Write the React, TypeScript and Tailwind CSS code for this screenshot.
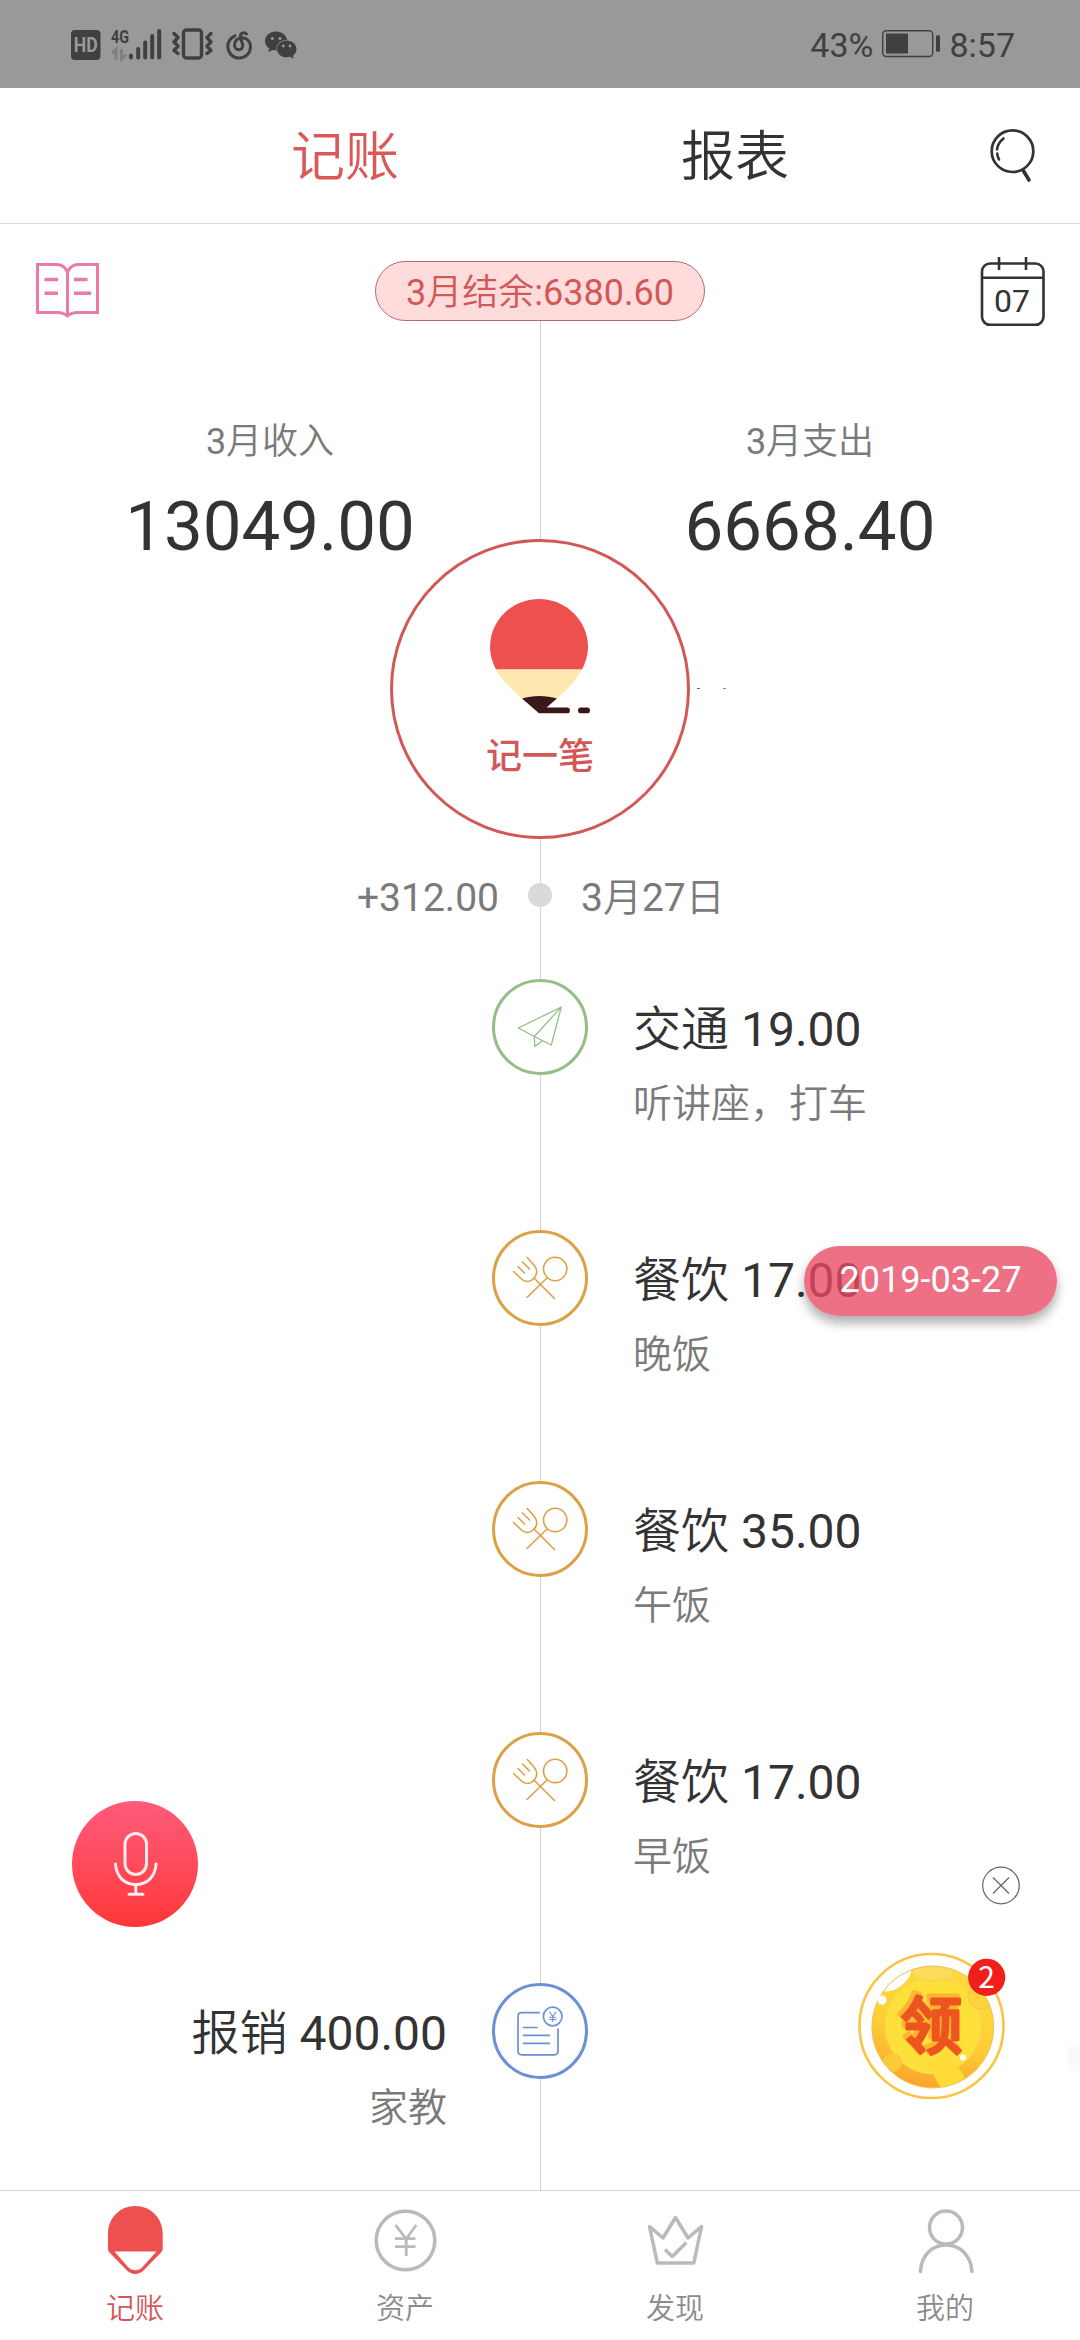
import type { ReactNode } from 'react';

type Kind = 'travel' | 'food' | 'refund';

interface Entry {
  kind: Kind;
  name: string;
  amount: string;
  note: string;
  side: 'left' | 'right';
}

const entries: Entry[] = [
  { kind: 'travel', name: '交通', amount: '19.00', note: '听讲座，打车', side: 'right' },
  { kind: 'food', name: '餐饮', amount: '17.00', note: '晚饭', side: 'right' },
  { kind: 'food', name: '餐饮', amount: '35.00', note: '午饭', side: 'right' },
  { kind: 'food', name: '餐饮', amount: '17.00', note: '早饭', side: 'right' },
  { kind: 'refund', name: '报销', amount: '400.00', note: '家教', side: 'left' },
];

const ringColor: Record<Kind, string> = {
  travel: 'border-[#94be85] text-[#94be85]',
  food: 'border-[#dca046] text-[#dca046]',
  refund: 'border-[#6a90d6] text-[#6a90d6]',
};

/* Chinese characters are set one step lighter than the digits beside them. */
function Han({ children }: { children: ReactNode }) {
  return <span className="font-[350]">{children}</span>;
}

function StatusIcons() {
  return (
    <svg width="240" height="48" viewBox="66 20 240 48" fill="none" stroke="#404040">
      <rect x="71" y="30" width="29.5" height="30" rx="4" fill="#404040" stroke="none" />
      <text x="85.800" y="52" textAnchor="middle" fontSize="19.500" fontWeight="700" fill="#999" stroke="none" textLength="24" lengthAdjust="spacingAndGlyphs">HD</text>
      <text x="111" y="43" fontSize="19" fontWeight="700" fill="#404040" stroke="none" textLength="18" lengthAdjust="spacingAndGlyphs">4G</text>
      <path d="M112 53.500l4-4V59.500M121.500 49v10l4.500-4.500" stroke="#7f7f7f" strokeWidth="3" />
      <path d="M131 55.500v2M138.200 49v8.500M145.200 42.500v15M152.200 36v21.500M159.200 31v26.500" strokeWidth="4" strokeLinecap="round" />
      <rect x="183.500" y="30" width="18" height="28" rx="3" strokeWidth="3.400" />
      <path d="M174 33.500l4 4-4 4.500 4 4-4 4.500 4 3M211 33.500l-4 4 4 4.500-4 4 4 4.500-4 3" strokeWidth="3.400" strokeLinejoin="round" strokeLinecap="round" />
      <path d="M235 35.800C230.500 38 227.800 41.800 227.800 46.300c0 6.500 5 11.700 11.300 11.700s11.400-5 11.400-11.300c0-5-3.700-9-8.500-9-4.500 0-7.500 3.500-7.500 7 0 3 2 5 4.200 5 2.500 0 4.300-2 4-4.500-.3-3-2.500-6.700-2.300-9.500.2-3 4-3.800 6-1.700" strokeWidth="3" strokeLinecap="round" />
      <path d="M276 31.500c-6.200 0-11 4.300-11 9.600 0 3.200 1.600 5.800 4.300 7.500l-1 3.600 4.200-2.200c1.300.3 2.500.5 4 .5-.8-6 4-10.800 10.700-10.500-1-5-5.500-8.500-11.200-8.500z" fill="#404040" stroke="none" />
      <path d="M286.800 40.500c-5.500 0-9.800 3.800-9.800 8.400 0 4.700 4.300 8.400 9.800 8.400 1.200 0 2.300-.2 3.300-.5l3.600 2-.9-3.100c2.300-1.600 3.700-4 3.700-6.800 0-4.600-4.300-8.400-9.700-8.400z" fill="#404040" stroke="none" />
      <g fill="#999" stroke="none">
        <circle cx="272.300" cy="38.500" r="1.500" /><circle cx="280" cy="38.500" r="1.500" />
        <circle cx="283.300" cy="46" r="1.400" /><circle cx="290" cy="46" r="1.400" />
      </g>
    </svg>
  );
}

function BatteryIcon() {
  return (
    <svg width="60" height="30" viewBox="880 30 60 30" fill="none" stroke="#404040">
      <rect x="881.700" y="31.700" width="50" height="25.800" rx="3.500" strokeWidth="1.400" />
      <rect x="885" y="34.500" width="22" height="20" fill="#404040" stroke="none" />
      <rect x="935" y="36" width="4" height="17" rx="1.800" fill="#404040" stroke="none" />
    </svg>
  );
}

function SearchIcon() {
  return (
    <svg width="60" height="64" viewBox="980 124 60 64" fill="none" stroke="#333" strokeLinecap="round">
      <circle cx="1012.500" cy="151.200" r="20.800" strokeWidth="2.700" />
      <path d="M1023.500 171l5.500 9" strokeWidth="3.600" />
      <path d="M1003.500 138.500c-3.500 2.800-6 6.500-6.500 11M997.200 153.500c.2 2.500.8 4.300 1.800 6" strokeWidth="2.600" />
    </svg>
  );
}

function BookIcon() {
  return (
    <svg width="75" height="80" viewBox="30 251 75 80" fill="none" stroke="#e87bac" strokeWidth="3">
      <path d="M67.500 272.500c-2-5.500-6-8-11-8H37.500V312.500H57c4 0 7.500.8 10.500 3.500 3-2.700 6.500-3.500 10.500-3.500h19.500V264.500H78.500c-5 0-9 2.500-11 8zV315" />
      <path d="M44.500 279.500H58M44.500 293.300H58M74 279.500h13.500M74 293.300h17" strokeWidth="3.600" />
    </svg>
  );
}

function CalendarIcon() {
  return (
    <svg width="75" height="80" viewBox="975 251 75 80" fill="none" stroke="#333" strokeWidth="2.600">
      <rect x="982" y="263.500" width="61.500" height="61.300" rx="8" />
      <path d="M982 277.700h61.500M999 257v13M1026 257v13" />
      <text x="1012" y="312.300" textAnchor="middle" fontSize="32" fill="#333" stroke="none">07</text>
    </svg>
  );
}

function BalloonPencil() {
  return (
    <svg width="294" height="190" viewBox="393 542 294 190">
      <path d="M539 599c-27.500 0-49 22-49 48 0 8 2.500 15.500 6 22.500h86c3.500-7 6-14.500 6-22.500 0-26-21.500-48-49-48z" fill="#ee5050" />
      <path d="M496 669.500h86c-6.500 11.500-16 21-26 29.500h-33.500c-10-9-20-18-26.500-29.500z" fill="#ffe8b0" />
      <path d="M522 698.500c10-3.500 24.500-3.500 35 0l-10.500 9H567a2.900 2.900 0 0 1 0 5.800H539z" fill="#3a1718" />
      <rect x="578" y="707.500" width="12" height="5.800" rx="2.900" fill="#3a1718" />
    </svg>
  );
}

function PlaneIcon() {
  return (
    <svg width="60" height="60" viewBox="510 997 60 60" fill="none" stroke="currentColor" strokeWidth="1.300" strokeLinejoin="round">
      <path d="M518.300 1028l43-21-10 38-17-8.500zM561.300 1007l-27 29.500.5 10 8-6" />
    </svg>
  );
}

function CutleryIcon() {
  return (
    <svg width="60" height="60" viewBox="510 1248 60 60" fill="none" stroke="currentColor" strokeWidth="1.600" strokeLinecap="round">
      <circle cx="555.200" cy="1269" r="11.700" />
      <path d="M547 1278l-20 19.500M534 1278l20.500 20.500" />
      <path d="M513.500 1271.500l8 7.500c4 3.500 9 3.300 12.500-.8s3.500-8.700.3-12.700l-7-8M518 1266.500l6.500 6.500M522.500 1262l7 7" />
    </svg>
  );
}

function ReceiptIcon() {
  return (
    <svg width="60" height="60" viewBox="510 2001 60 60" fill="none" stroke="currentColor" strokeWidth="1.700" strokeLinecap="round">
      <path d="M539 2012.700h-17.200q-3.800 0-3.800 3.800v34.500q0 3.800 3.800 3.800h32.400q3.800 0 3.800-3.800V2029" />
      <path d="M523.500 2027.500H537M523.500 2035.300h26M523.500 2043.300h26" />
      <circle cx="552.700" cy="2016.500" r="9.300" />
      <path d="M549.500 2012l3.200 4.500 3.200-4.500M552.700 2016.500v5M549.500 2017.200h6.400M549.500 2019.500h6.400" strokeWidth="1.100" />
    </svg>
  );
}

const kindIcon: Record<Kind, ReactNode> = {
  travel: <PlaneIcon />,
  food: <CutleryIcon />,
  refund: <ReceiptIcon />,
};

function Details({ entry }: { entry: Entry }) {
  return (
    <div className={entry.side === 'left' ? 'col-start-1 row-start-1 pt-[21px] text-right' : 'col-start-3 row-start-1 pt-[21px]'}>
      <div className="h-[60px] text-[48px] leading-[60px] whitespace-nowrap text-[#333]">
        <Han>{entry.name}</Han> {entry.amount}
      </div>
      <div className="mt-[19px] h-[50px] text-[39px] leading-[50px] whitespace-nowrap text-[#7a7a7a]"><Han>{entry.note}</Han></div>
    </div>
  );
}

function TimelineEntry({ entry }: { entry: Entry }) {
  return (
    <li className="grid h-[251px] shrink-0 grid-cols-[1fr_186px_1fr]">
      <Details entry={entry} />
      <div className="col-start-2 row-start-1 flex justify-center">
        <span className={'flex size-[96px] items-center justify-center rounded-full border-[3px] bg-white ' + ringColor[entry.kind]}>
          {kindIcon[entry.kind]}
        </span>
      </div>
    </li>
  );
}

function Total({ month, label, value }: { month: string; label: string; value: string }) {
  return (
    <div className="flex flex-col items-center pt-[84px]">
      <span className="text-[36px] leading-[54px] text-[#7a7a7a]">{month}<Han>{label}</Han></span>
      <span className="mt-[18px] text-[69px] leading-[80px] text-[#333]">{value}</span>
    </div>
  );
}

function RewardCoin() {
  return (
    <svg width="160" height="160" viewBox="852 1946 160 160">
      <defs>
        <linearGradient id="coin" x1="0.600" y1="0" x2="0.350" y2="1">
          <stop offset="0" stopColor="#fddc38" />
          <stop offset="0.550" stopColor="#fdcf36" />
          <stop offset="1" stopColor="#fba22c" />
        </linearGradient>
        <clipPath id="coinFace"><circle cx="932.800" cy="2027" r="61" /></clipPath>
      </defs>
      <circle cx="931.500" cy="2026" r="72" fill="#fffefa" stroke="#f7c545" strokeWidth="2.600" />
      <g clipPath="url(#coinFace)">
        <circle cx="932.800" cy="2027" r="61" fill="url(#coin)" />
        <circle cx="933" cy="2026" r="48" fill="#fee03a" stroke="#f9d65a" strokeWidth="1" />
        <path d="M925 2060l17 30 26-8-18-28z" fill="#fedb38" />
        <ellipse cx="933" cy="1972" rx="21" ry="9" fill="#fddc5c" stroke="#f7cb55" strokeWidth="0.800" />
        <circle cx="892" cy="2063" r="9.500" fill="#fdcb37" stroke="#f5ba40" strokeWidth="0.800" />
        <circle cx="981" cy="1996" r="13" fill="#fdd33d" stroke="#f5c348" strokeWidth="0.800" />
        <path d="M882 1991c5-11 16-20 29-21 1 9-15 24-29 21z" fill="#fff" />
      </g>
      <circle cx="932.800" cy="2027" r="61" fill="none" stroke="#eec05a" strokeWidth="1" />
      <circle cx="882" cy="2000" r="4.500" fill="#fff" />
      <g fontSize="62" fontWeight="500" textAnchor="middle" strokeLinejoin="round" strokeLinecap="round">
        <text x="929" y="2045.500" fill="#fbb62f" stroke="#fbb62f" strokeWidth="5">领</text>
        <text x="931.500" y="2049" fill="#ee5420" stroke="#ee5420" strokeWidth="2.800">领</text>
      </g>
      <circle cx="963" cy="2057.500" r="3" fill="#fff" />
      <circle cx="986.700" cy="1977.300" r="18.600" fill="#f01f1c" />
      <text x="986.700" y="1988" textAnchor="middle" fontSize="30" fill="#fff" style={{ fontFamily: '"Noto Sans CJK SC", sans-serif' }}>2</text>
    </svg>
  );
}

function NavItem({ label, active, children }: { label: string; active?: boolean; children: ReactNode }) {
  return (
    <a className={active ? 'flex flex-col items-center text-[#d25858]' : 'flex flex-col items-center text-[#8c8c8c]'}>
      {children}
      <span className="text-[29px] leading-[40px]"><Han>{label}</Han></span>
    </a>
  );
}

export default function App() {
  return (
    <div lang="zh-CN" className="flex h-[2340px] w-[1080px] flex-col overflow-hidden bg-white font-['Roboto','Noto_Sans_CJK_SC',sans-serif]">
      <div className="flex h-[88px] shrink-0 items-center bg-[#999] pl-[66px] text-[34px] leading-[40px] text-[#404040]">
        <StatusIcons />
        <span className="ml-auto pt-[2px]">43%</span>
        <span className="mx-[8px]"><BatteryIcon /></span>
        <span className="mr-[65px] pt-[2px]">8:57</span>
      </div>

      <header className="flex h-[136px] shrink-0 items-center border-b border-[#dcdcdc] text-[54px] leading-[64px]">
        <span className="ml-[291px] pt-[5px] text-[#dc5858]"><Han>记账</Han></span>
        <span className="ml-[282px] pt-[5px] text-[#333]"><Han>报表</Han></span>
        <span className="mr-[40px] ml-auto"><SearchIcon /></span>
      </header>

      <main className="relative isolate flex min-h-0 flex-1 flex-col overflow-hidden">
        <div className="absolute top-[97px] bottom-0 left-[540px] -z-10 w-px bg-[#d2d3d4]" />
        <div className="mt-[27px] flex h-[80px] shrink-0 items-center justify-between px-[30px]">
          <BookIcon />
          <div className="flex h-[60px] w-[330px] items-center justify-center rounded-full border border-[#b9686c] bg-[#ffdcdc] pt-[3px] text-[36px] leading-[54px] whitespace-pre text-[#d25858]">
            3<Han>月结余</Han>:6380.60
          </div>
          <CalendarIcon />
        </div>

        <section className="grid h-[236px] shrink-0 grid-cols-2">
          <Total month="3" label="月收入" value="13049.00" />
          <Total month="3" label="月支出" value="6668.40" />
        </section>

        <div className="relative -mt-[28px] flex size-[300px] shrink-0 flex-col items-center self-center rounded-full border-[3px] border-[#d25858] bg-white">
          <BalloonPencil />
          <span className="text-[36px] leading-[50px] font-medium text-[#d25858]">记一笔</span>
          <i className="absolute top-[146px] left-[304px] h-px w-[3px] bg-[#666]" />
          <i className="absolute top-[146px] left-[330px] h-px w-[3px] bg-[#888]" />
        </div>

        <div className="mt-[29px] grid h-[60px] shrink-0 grid-cols-[1fr_82px_1fr] items-center text-[39px] leading-[60px] text-[#7a7a7a]">
          <span className="text-right">+312.00</span>
          <span className="mb-[6px] size-[24px] justify-self-center rounded-full bg-[#d8dadc]" />
          <span>3<Han>月</Han>27<Han>日</Han></span>
        </div>

        <ul className="mt-[51px] flex flex-col">
          {entries.map((entry, i) => (
            <TimelineEntry key={i} entry={entry} />
          ))}
        </ul>

        <div className="absolute top-[1022px] left-[804px] flex h-[70px] w-[253px] items-center justify-center rounded-full bg-[rgb(233,72,98)]/78 text-[36px] leading-[40px] text-white shadow-[0_7px_11px_rgba(0,0,0,0.32)]">
          <span className="pb-[2px]">2019-03-27</span>
        </div>

        <button className="absolute top-[1577px] left-[72px] flex size-[126px] items-center justify-center rounded-full bg-linear-to-b from-[#ff5a7a] to-[#ff3636]">
          <svg width="60" height="80" viewBox="105 1824 60 80" fill="none" stroke="#ffeaee" strokeWidth="3" strokeLinecap="round">
            <rect x="125" y="1833.500" width="21.500" height="41" rx="10.750" />
            <path d="M115.500 1864c1 13 9 20.500 20.300 20.500s19.300-7.500 20.300-20.500M135.800 1885v8.500M129 1894.300h14" />
          </svg>
        </button>

        <svg className="absolute top-[1641px] left-[981px]" width="40" height="40" viewBox="0 0 40 40" fill="none" stroke="#666" strokeWidth="1.200">
          <circle cx="20" cy="20.500" r="18.300" />
          <path d="M12 12.500l16 16M28 12.500l-16 16" />
        </svg>
        <div className="absolute top-[1722px] left-[852px]"><RewardCoin /></div>
        <div className="absolute top-[1823px] right-0 h-[24px] w-[12px] bg-[#fafafa]" />
      </main>

      <nav className="grid h-[150px] shrink-0 grid-cols-4 border-t border-[#d6d8d8] bg-white">
        <NavItem label="记账" active>
          <svg width="80" height="98" viewBox="95 2191 80 98">
            <path d="M135.300 2206c-15.500 0-27.300 12-27.300 27.500V2249c0 1.300.5 2.500 1.500 3.500l17.500 18c4.500 4.500 12 4.500 16.500 0l17.500-18c1-1 1.700-2.200 1.700-3.500v-15.500c0-15.500-12-27.500-27.400-27.500zM114.500 2251.500h42l-14 15.500c-4 4.300-10.500 4.300-14.500 0z" fill="#ee5050" fillRule="evenodd" />
          </svg>
        </NavItem>
        <NavItem label="资产">
          <svg width="80" height="98" viewBox="365 2191 80 98" fill="none" stroke="#bababa" strokeWidth="3.500">
            <circle cx="405.500" cy="2240.500" r="29.300" />
            <path d="M395.500 2225l10.700 14 10-14M406.200 2238v18M395 2238.700h20.500M395 2246.700h20.500" strokeWidth="2.800" />
          </svg>
        </NavItem>
        <NavItem label="发现">
          <svg width="80" height="98" viewBox="635 2191 80 98" fill="none" stroke="#bababa" strokeWidth="3.500" strokeLinejoin="round">
            <path d="M649.500 2226.500l13.500 11.500 12.500-20.500 12.500 20.500 13.500-11.500-7.700 36.500H657.300z" />
            <path d="M665 2249.500l7.300 7 14-14" />
          </svg>
        </NavItem>
        <NavItem label="我的">
          <svg width="80" height="98" viewBox="905 2191 80 98" fill="none" stroke="#bababa" strokeWidth="3.500" strokeLinecap="round">
            <circle cx="946" cy="2227.500" r="16.500" />
            <path d="M920.500 2271.500c.5-15.500 11-26.500 25.500-26.500s25.300 11 25.800 26.500" />
          </svg>
        </NavItem>
      </nav>
    </div>
  );
}
